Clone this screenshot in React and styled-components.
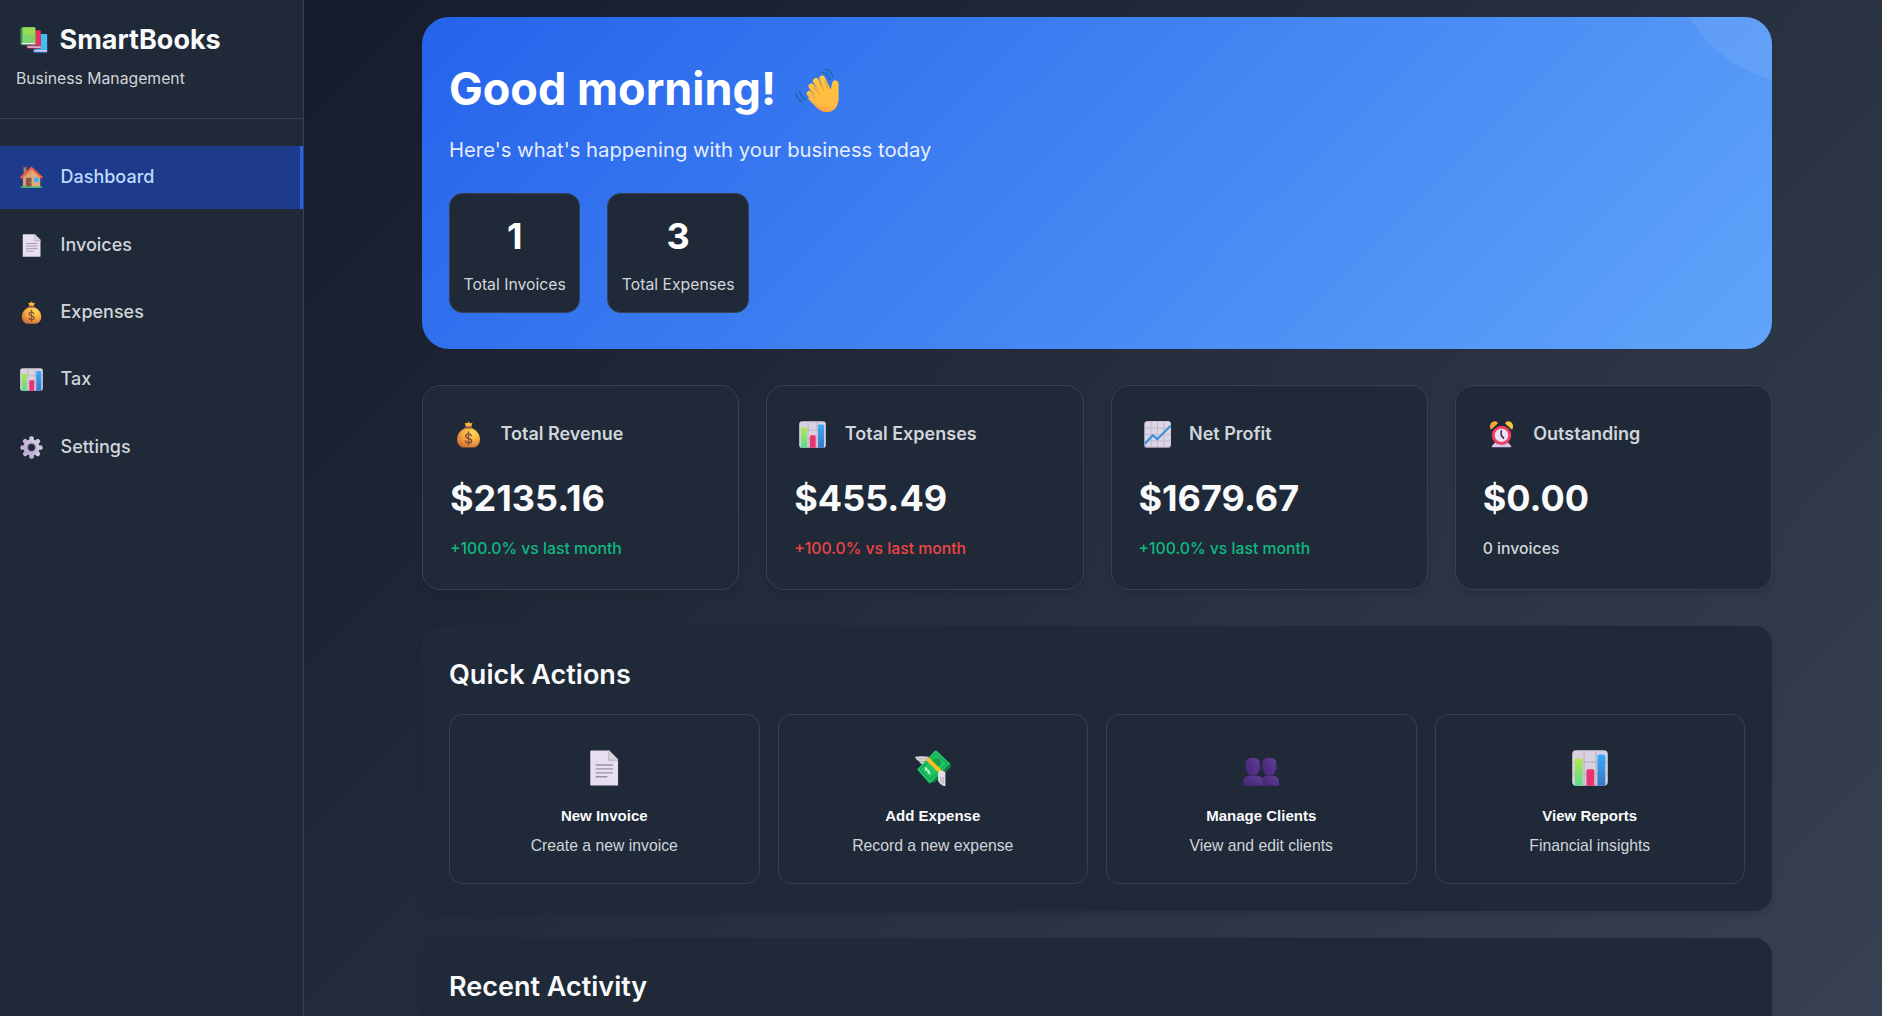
import React from "react";
import styled, { createGlobalStyle } from "styled-components";

const inter = '"Inter", "Liberation Sans", sans-serif';

const GlobalStyle = createGlobalStyle`
  html { font-size: 18px; }
  *, *::before, *::after { box-sizing: border-box; }
  body {
    margin: 0;
    height: 1016px;
    overflow: hidden;
    font-family: ${inter};
    line-height: 1.6;
    color: #f9fafb;
    background: #111827;
  }
  h1, h2, p { margin: 0; }
  button { font: inherit; color: inherit; }
`;

const Shell = styled.div`
  display: flex;
  height: 1016px;
  overflow: hidden;
  background: linear-gradient(135deg, #111827 0%, #374151 100%);
`;

const Sidebar = styled.aside`
  flex: 0 0 304px;
  background: #1f2937;
  border-right: 1px solid #374151;
`;

const Brand = styled.header`
  height: 119px;
  padding: 18px 16px 0;
  border-bottom: 1px solid #374151;
`;

const BrandName = styled.div`
  display: flex;
  align-items: center;
  height: 43px;
  gap: 7.5px;
  font-size: 27px;
  font-weight: 700;
  white-space: nowrap;
`;

const BrandTagline = styled.p`
  margin-top: 5px;
  font-size: 15.75px;
  line-height: 26px;
  color: #d1d5db;
`;

const Nav = styled.nav`
  display: flex;
  flex-direction: column;
  gap: 4px;
  padding-top: 27px;
`;

const NavItem = styled.a`
  display: flex;
  align-items: center;
  gap: 13.5px;
  height: 63.4px;
  padding: 0 16px;
  font-size: 18px;
  font-weight: 500;
  color: ${(p) => (p.$active ? "#bfdbfe" : "#d1d5db")};
  background: ${(p) => (p.$active ? "#1e3a8a" : "transparent")};
  border-right: 3px solid ${(p) => (p.$active ? "#2563eb" : "transparent")};
`;

const IconSlot = styled.span`
  display: inline-flex;
  align-items: center;
  justify-content: center;
  flex: none;
  width: ${(p) => p.$w}px;
  height: ${(p) => p.$h || p.$w}px;
  padding-top: ${(p) => p.$drop || 0}px;
`;

const Main = styled.main`
  flex: 1;
  padding: 16.5px 110px 0 118px;
`;

const Hero = styled.section`
  position: relative;
  overflow: hidden;
  height: 332px;
  padding: 36px 27px;
  border-radius: 27px;
  background: linear-gradient(135deg, #2563eb 0%, #60a5fa 100%);

  &::before {
    content: "";
    position: absolute;
    top: -206px;
    right: -171px;
    width: 273px;
    height: 273px;
    border-radius: 50%;
    background: rgba(255, 255, 255, 0.08);
  }
`;

const Greeting = styled.h1`
  display: flex;
  align-items: center;
  height: 72px;
  gap: 18px;
  font-size: 45px;
  font-weight: 700;
  line-height: 72px;
  color: #fff;
`;

const Lead = styled.p`
  margin-top: 9px;
  font-size: 20.25px;
  line-height: 32px;
  color: rgba(255, 255, 255, 0.9);
`;

const HeroStats = styled.div`
  display: flex;
  gap: 27px;
  margin-top: 27px;
`;

const HeroStat = styled.div`
  height: 120px;
  padding: 13px 13.5px;
  text-align: center;
  background: #1f2937;
  border: 1px solid #374151;
  border-radius: 13.5px;
`;

const HeroStatValue = styled.div`
  font-size: 36px;
  font-weight: 700;
  line-height: 58px;
  color: #fff;
`;

const HeroStatLabel = styled.div`
  margin-top: 7px;
  font-size: 15.75px;
  line-height: 26px;
  color: #d1d5db;
`;

const Metrics = styled.section`
  display: grid;
  grid-template-columns: repeat(4, 1fr);
  gap: 27px;
  margin-top: 36px;
`;

const MetricCard = styled.article`
  height: 205px;
  padding: 27px;
  background: #1f2937;
  border: 1px solid #374151;
  border-radius: 18px;
  box-shadow: 0 4px 6px rgba(0, 0, 0, 0.1);
`;

const MetricHead = styled.div`
  display: flex;
  align-items: center;
  gap: 13.5px;
  height: 43px;
  font-size: 18px;
  font-weight: 600;
  color: #d1d5db;
`;

const MetricValue = styled.div`
  margin-top: 13px;
  font-size: 36px;
  font-weight: 700;
  line-height: 58px;
`;

const tones = { up: "#10b981", down: "#ef4444", plain: "#d1d5db" };

const MetricChange = styled.div`
  margin-top: 9.5px;
  font-size: 15.75px;
  font-weight: 500;
  line-height: 26px;
  color: ${(p) => tones[p.$tone]};
`;

const Panel = styled.section`
  height: 285px;
  margin-top: ${(p) => p.$gap}px;
  padding: 27px;
  background: #1f2937;
  border-radius: 18px;
  box-shadow: 0 4px 6px rgba(0, 0, 0, 0.1);
`;

const PanelTitle = styled.h2`
  font-size: 27px;
  font-weight: 600;
  line-height: 43px;
`;

const Actions = styled.div`
  display: grid;
  grid-template-columns: repeat(4, 1fr);
  gap: 18px;
  margin-top: 18px;
`;

const ActionButton = styled.button`
  display: flex;
  flex-direction: column;
  align-items: center;
  height: 170px;
  padding: 34.5px 20px 0;
  background: transparent;
  border: 1px solid #374151;
  border-radius: 13.5px;
  font-family: "Liberation Sans", Arial, sans-serif;
`;

const ActionTitle = styled.span`
  margin-top: 18px;
  font-size: 15px;
  font-weight: 700;
  line-height: 24px;
`;

const ActionText = styled.span`
  margin-top: 6px;
  font-size: 15.75px;
  line-height: 24px;
  color: #d1d5db;
`;

const Svg = ({ size, children }) => (
  <svg width={size} height={size} viewBox="0 0 32 32" fill="none" aria-hidden="true">
    {children}
  </svg>
);

const Books = ({ size }) => (
  <Svg size={size}>
    <path d="M15 27l2-3V9h12.500q1.500 0 1.500 1.500V30.500H16.500Q15 30.500 15 28.500z" fill="#3f78c8" />
    <path d="M18.500 9H30q1 0 1 1v17H18.500z" fill="#42c0f3" />
    <path d="M16.500 27.600H31v1.600H16.500z" fill="#eee2ff" />
    <path d="M7.500 21l2-3V5H22q1.700 0 1.700 1.700V26H9q-1.500 0-1.500-2z" fill="#a8225a" />
    <path d="M11 5h11.500q1.200 0 1.200 1.200V22.700H11z" fill="#e8305f" />
    <path d="M8.500 23.300h15.200v1.500H8.500z" fill="#eee2ff" />
    <path d="M.5 3.500Q.5 1.500 2.500 1.500h14q1 0 1 1V22h-15q-2 0-2-2z" fill="#3f9360" />
    <path d="M3 1.500h13.500q1 0 1 1V19H3z" fill="#98dc56" />
    <path d="M3 10h14.500v9H3z" fill="#6fcd75" opacity=".65" />
    <path d="M2 19.300h15.500v1.500H2z" fill="#f1e7ff" />
  </Svg>
);

const House = ({ size }) => (
  <Svg size={size}>
    <path d="M5 2h4v9H5z" fill="#b07a5c" />
    <path d="M4.500 1h5v2h-5z" fill="#8d5a48" />
    <path d="M4 15L16 4l12 11v14H4z" fill="#d9a06f" />
    <path d="M16 4l12 11v14H16z" fill="#e3ab78" />
    <path d="M1.800 15.800L16 2.800l14.200 13" stroke="#ef5b3c" strokeWidth="3" strokeLinecap="round" />
    <path d="M8.500 16.500h7.500V29H8.500z" fill="#85544f" />
    <circle cx="14.200" cy="23" r=".8" fill="#f3b96b" />
    <path d="M19.500 16h6.500v6.500h-6.500z" fill="#3fb4f5" />
    <path d="M1 28.500h30v2H1z" fill="#44c46a" />
  </Svg>
);

const Page = ({ size }) => (
  <Svg size={size}>
    <path d="M3.800 1.500q0-1 1-1h15.700L28.500 8.500V31q0 .5-.5.500H4.500q-.7 0-.7-.7z" fill="#e7deef" />
    <path d="M20.500.5l8 8V10h-8q-1 0-1-1V.5z" fill="#c4bccb" />
    <path d="M20.500.5l8 8h-7q-1 0-1-1z" fill="#d7d1dc" />
    <path d="M9 13.300h14.500M9 16.800h14.500M9 20.300h14.500M9 23.800h9.500" stroke="#9b93a5" strokeWidth="1.200" strokeLinecap="round" />
  </Svg>
);

const MoneyBag = ({ size }) => (
  <Svg size={size}>
    <defs>
      <radialGradient id="bag" cx=".66" cy=".25" r=".85">
        <stop offset="0" stopColor="#ffdd55" />
        <stop offset=".55" stopColor="#f3a63e" />
        <stop offset="1" stopColor="#c9663b" />
      </radialGradient>
    </defs>
    <path d="M11.500 2.500l3 .2L16 .5l1.700 2.200 3-.2L19 7h-6z" fill="#f8b83c" />
    <path d="M12.500 6.500h7l2.500 4H10z" fill="#8a5148" />
    <path d="M11.500 9h9c5.500 2.300 9 7.200 9 12.500 0 6-3.500 10-8.500 10H11c-5 0-8.500-4-8.500-10C2.500 16.200 6 11.300 11.500 9z" fill="url(#bag)" />
    <path d="M19.400 17.300c-.6-1.300-1.800-1.900-3.400-1.900-2 0-3.400 1-3.400 2.600 0 3.600 7 1.700 7 5.300 0 1.700-1.500 2.700-3.600 2.700-1.800 0-3.200-.8-3.800-2.200M16 13.200v15" stroke="#8d5340" strokeWidth="1.900" strokeLinecap="round" />
  </Svg>
);

const BarChart = ({ size }) => (
  <Svg size={size}>
    <defs>
      <linearGradient id="barGreen" x1="0" y1="0" x2="0" y2="1">
        <stop stopColor="#b3e64c" />
        <stop offset="1" stopColor="#5bdc91" />
      </linearGradient>
      <linearGradient id="barBlue" x1="0" y1="0" x2="0" y2="1">
        <stop stopColor="#36adf8" />
        <stop offset="1" stopColor="#3a76c8" />
      </linearGradient>
    </defs>
    <rect x=".2" y=".2" width="31.600" height="31.600" rx="3.500" fill="#d9d1e0" />
    <path d="M10.800.5v31M21.300.5v31M.5 10.800h31M.5 21.500h31" stroke="#b9b2c0" strokeWidth="1" />
    <path d="M2.500 9q0-1.500 1.500-1.500h4q1.500 0 1.500 1.500v22.800h-7z" fill="url(#barGreen)" />
    <path d="M12.800 18.500q0-1.500 1.500-1.500h4q1.500 0 1.500 1.500v13.300h-7z" fill="#e8356f" />
    <path d="M22.600 5.500q0-1.500 1.500-1.500h4q1.500 0 1.500 1.500v26.300h-7z" fill="url(#barBlue)" />
  </Svg>
);

const LineChart = ({ size }) => (
  <Svg size={size}>
    <rect x=".2" y=".2" width="31.600" height="31.600" rx="3.500" fill="#bdaed0" />
    <rect x="1.200" y=".2" width="30.600" height="30.200" rx="3" fill="#dcd5e3" />
    <path d="M8.500.5v30M16 .5v30M23.500.5v30M1 8.500h30.500M1 16h30.500M1 23.500h30.500" stroke="#bdb5c6" strokeWidth="1" />
    <path d="M1 27l9.500-10 5.300 4.500L31.500 5.500" stroke="#368fd9" strokeWidth="2.500" strokeLinejoin="round" />
  </Svg>
);

const Gear = ({ size }) => (
  <Svg size={size}>
    <defs>
      <linearGradient id="gear" x1="1" y1="0" x2="0" y2="1">
        <stop stopColor="#ddd3e4" />
        <stop offset="1" stopColor="#b6a3cf" />
      </linearGradient>
    </defs>
    {[0, 45, 90, 135].map((a) => (
      <rect key={a} x="12.800" y=".5" width="6.400" height="31" rx="2.600" fill="url(#gear)" transform={`rotate(${a} 16 16)`} />
    ))}
    <circle cx="16" cy="16" r="11.200" fill="url(#gear)" />
    <circle cx="16" cy="16" r="6.800" fill="#a99abb" />
    <circle cx="16" cy="16" r="4.800" fill="#1f2937" />
  </Svg>
);

const AlarmClock = ({ size }) => (
  <Svg size={size}>
    <path d="M9 25l-4.500 4.500q-.7 1.500 1 1.500h21q1.700 0 1-1.500L23 25z" fill="#dac5ee" />
    <path d="M3.500 10.500C.5 5 4 .3 8 .3c2 0 3.500 1.300 3.700 2.700z" fill="#f6a934" />
    <path d="M28.500 10.500C31.500 5 28 .3 24 .3c-2 0-3.500 1.300-3.700 2.700z" fill="#fbc53a" />
    <circle cx="16" cy="17" r="11.500" fill="#ef3e61" />
    <circle cx="16" cy="17" r="8" fill="#ece1f5" />
    <path d="M15.700 11.500V17l2.700 3.300" stroke="#46324f" strokeWidth="1.900" strokeLinecap="round" />
  </Svg>
);

const FlyingMoney = ({ size }) => (
  <Svg size={size}>
    <path d="M0 6q6-1 12 0L7.500 13Q4 12 3.500 9.800 1 9 0 6z" fill="#dddadd" />
    <path d="M2 7.800h8M3.800 10.200h5" stroke="#aaa6ad" strokeWidth=".8" />
    <path d="M3 18.500L18.500 4 31.800 12v3.200L18 28.500l-5.500 1.500z" fill="#0f7d45" />
    <path d="M1.800 17.300L17.300 1q1.300-1.100 2.500 0L31 12 14.500 28.500q-1.300 1-2.400 0z" fill="#20c565" />
    <path d="M4.700 17.300L18.500 3.300 28.500 12 13.400 26z" stroke="#149c51" strokeWidth=".9" />
    <circle cx="19" cy="11.300" r="4.200" fill="#189e50" />
    <path d="M11 16c-2.300.3-2 2.300-.1 2.200s2.600 1.700.5 2.400M9 15.500l4.500 6" stroke="#c8f5d6" strokeWidth="1.100" />
    <path d="M9.500 8.800L12.200 6.500 25 19l-3 2z" fill="#fcbf25" />
    <path d="M20.500 19.800q3-2.500 6.500 0V32.500q-5-1.500-6.500-5z" fill="#e3dfe3" />
    <path d="M23 24v5M25 24v6.500" stroke="#aaa5ad" strokeWidth=".8" />
  </Svg>
);

const People = ({ size }) => (
  <Svg size={size}>
    <defs>
      <linearGradient id="head" x1="0" y1=".7" x2="1" y2="0">
        <stop stopColor="#472776" />
        <stop offset="1" stopColor="#61409a" />
      </linearGradient>
    </defs>
    <path d="M.2 31.800V28q0-5 5.500-5H12q6 0 6 5v3.800z" fill="url(#head)" />
    <path d="M2.500 12.500Q2 6.800 8.700 6.800t6.200 5.700L14.300 18q-1 5.200-5.600 5.200T3.100 18z" fill="url(#head)" />
    <circle cx="15" cy="15.700" r="1.300" stroke="#54348a" strokeWidth=".8" />
    <circle cx="2.500" cy="15.700" r="1.100" stroke="#4a2c7b" strokeWidth=".7" />
    <path d="M17 31.800V25q1.500-2 4.500-2h5q5.500 0 5.500 5v3.800z" fill="url(#head)" />
    <path d="M17.200 12.500q-.5-5.700 6.200-5.700t6.200 5.700L29 18q-1 5.200-5.600 5.200T17.800 18z" fill="url(#head)" />
    <circle cx="29.700" cy="15.700" r="1.300" stroke="#54348a" strokeWidth=".8" />
  </Svg>
);

const WavingHand = ({ size }) => (
  <Svg size={size}>
    <defs>
      <linearGradient id="hand" gradientUnits="userSpaceOnUse" x1="24" y1="6" x2="16" y2="32">
        <stop stopColor="#ffc83a" />
        <stop offset=".75" stopColor="#ffb944" />
        <stop offset="1" stopColor="#f58a4b" />
      </linearGradient>
    </defs>
    <path d="M18.800 2.800q4.500.7 5.900 5.200M21.600.9q4 .8 5.200 4.800M.6 17.800q.9 4.700 4.800 6.400M3.200 16.200q.8 4.500 4.500 6.300" stroke="#1769ae" strokeWidth="1.100" strokeLinecap="round" />
    <g stroke="url(#hand)" strokeLinecap="round">
      <path d="M10.300 18.200l8.200 8.800" strokeWidth="4" />
      <path d="M11.700 13l8.300 10" strokeWidth="4.200" />
      <path d="M14.900 9.200l7.100 11.300" strokeWidth="4.200" />
      <path d="M19.300 7.300L25 19" strokeWidth="4" />
    </g>
    <path d="M13 20l8-7 4.300 3 1-5q.6-2.400 2.800-2.200 2 .3 1.900 2.700V22c-.2 5.500-3.500 9.300-8 9.500-3.500.2-5.500-1.200-8-3.700L9 21.500z" fill="url(#hand)" />
    <path d="M13.300 13.500l4 5M17.200 10l3.500 6M21.300 9.800l2.500 5M11.500 18.500l3 3" stroke="#e6942d" strokeWidth=".7" strokeLinecap="round" />
  </Svg>
);

const navItems = [
  { label: "Dashboard", Icon: House, active: true },
  { label: "Invoices", Icon: Page },
  { label: "Expenses", Icon: MoneyBag },
  { label: "Tax", Icon: BarChart },
  { label: "Settings", Icon: Gear },
];

const metrics = [
  { label: "Total Revenue", value: "$2135.16", change: "+100.0% vs last month", tone: "up", Icon: MoneyBag },
  { label: "Total Expenses", value: "$455.49", change: "+100.0% vs last month", tone: "down", Icon: BarChart },
  { label: "Net Profit", value: "$1679.67", change: "+100.0% vs last month", tone: "up", Icon: LineChart },
  { label: "Outstanding", value: "$0.00", change: "0 invoices", tone: "plain", Icon: AlarmClock },
];

const actions = [
  { title: "New Invoice", text: "Create a new invoice", Icon: Page },
  { title: "Add Expense", text: "Record a new expense", Icon: FlyingMoney },
  { title: "Manage Clients", text: "View and edit clients", Icon: People },
  { title: "View Reports", text: "Financial insights", Icon: BarChart },
];

export default function App() {
  return (
    <>
      <GlobalStyle />
      <Shell>
        <Sidebar>
          <Brand>
            <BrandName>
              <IconSlot $w={36} $h={36} $drop={1}><Books size={28} /></IconSlot>
              SmartBooks
            </BrandName>
            <BrandTagline>Business Management</BrandTagline>
          </Brand>
          <Nav>
            {navItems.map(({ label, Icon, active }) => (
              <NavItem key={label} $active={active}>
                <IconSlot $w={31}><Icon size={23} /></IconSlot>
                {label}
              </NavItem>
            ))}
          </Nav>
        </Sidebar>
        <Main>
          <Hero>
            <Greeting>
              Good morning!
              <IconSlot $w={46} $h={46} $drop={3}><WavingHand size={45} /></IconSlot>
            </Greeting>
            <Lead>Here's what's happening with your business today</Lead>
            <HeroStats>
              <HeroStat>
                <HeroStatValue>1</HeroStatValue>
                <HeroStatLabel>Total Invoices</HeroStatLabel>
              </HeroStat>
              <HeroStat>
                <HeroStatValue>3</HeroStatValue>
                <HeroStatLabel>Total Expenses</HeroStatLabel>
              </HeroStat>
            </HeroStats>
          </Hero>
          <Metrics>
            {metrics.map(({ label, value, change, tone, Icon }) => (
              <MetricCard key={label}>
                <MetricHead>
                  <IconSlot $w={37} $h={30}><Icon size={27} /></IconSlot>
                  {label}
                </MetricHead>
                <MetricValue>{value}</MetricValue>
                <MetricChange $tone={tone}>{change}</MetricChange>
              </MetricCard>
            ))}
          </Metrics>
          <Panel $gap={36}>
            <PanelTitle>Quick Actions</PanelTitle>
            <Actions>
              {actions.map(({ title, text, Icon }) => (
                <ActionButton key={title}>
                  <IconSlot $w={37}><Icon size={36} /></IconSlot>
                  <ActionTitle>{title}</ActionTitle>
                  <ActionText>{text}</ActionText>
                </ActionButton>
              ))}
            </Actions>
          </Panel>
          <Panel $gap={27}>
            <PanelTitle>Recent Activity</PanelTitle>
          </Panel>
        </Main>
      </Shell>
    </>
  );
}
